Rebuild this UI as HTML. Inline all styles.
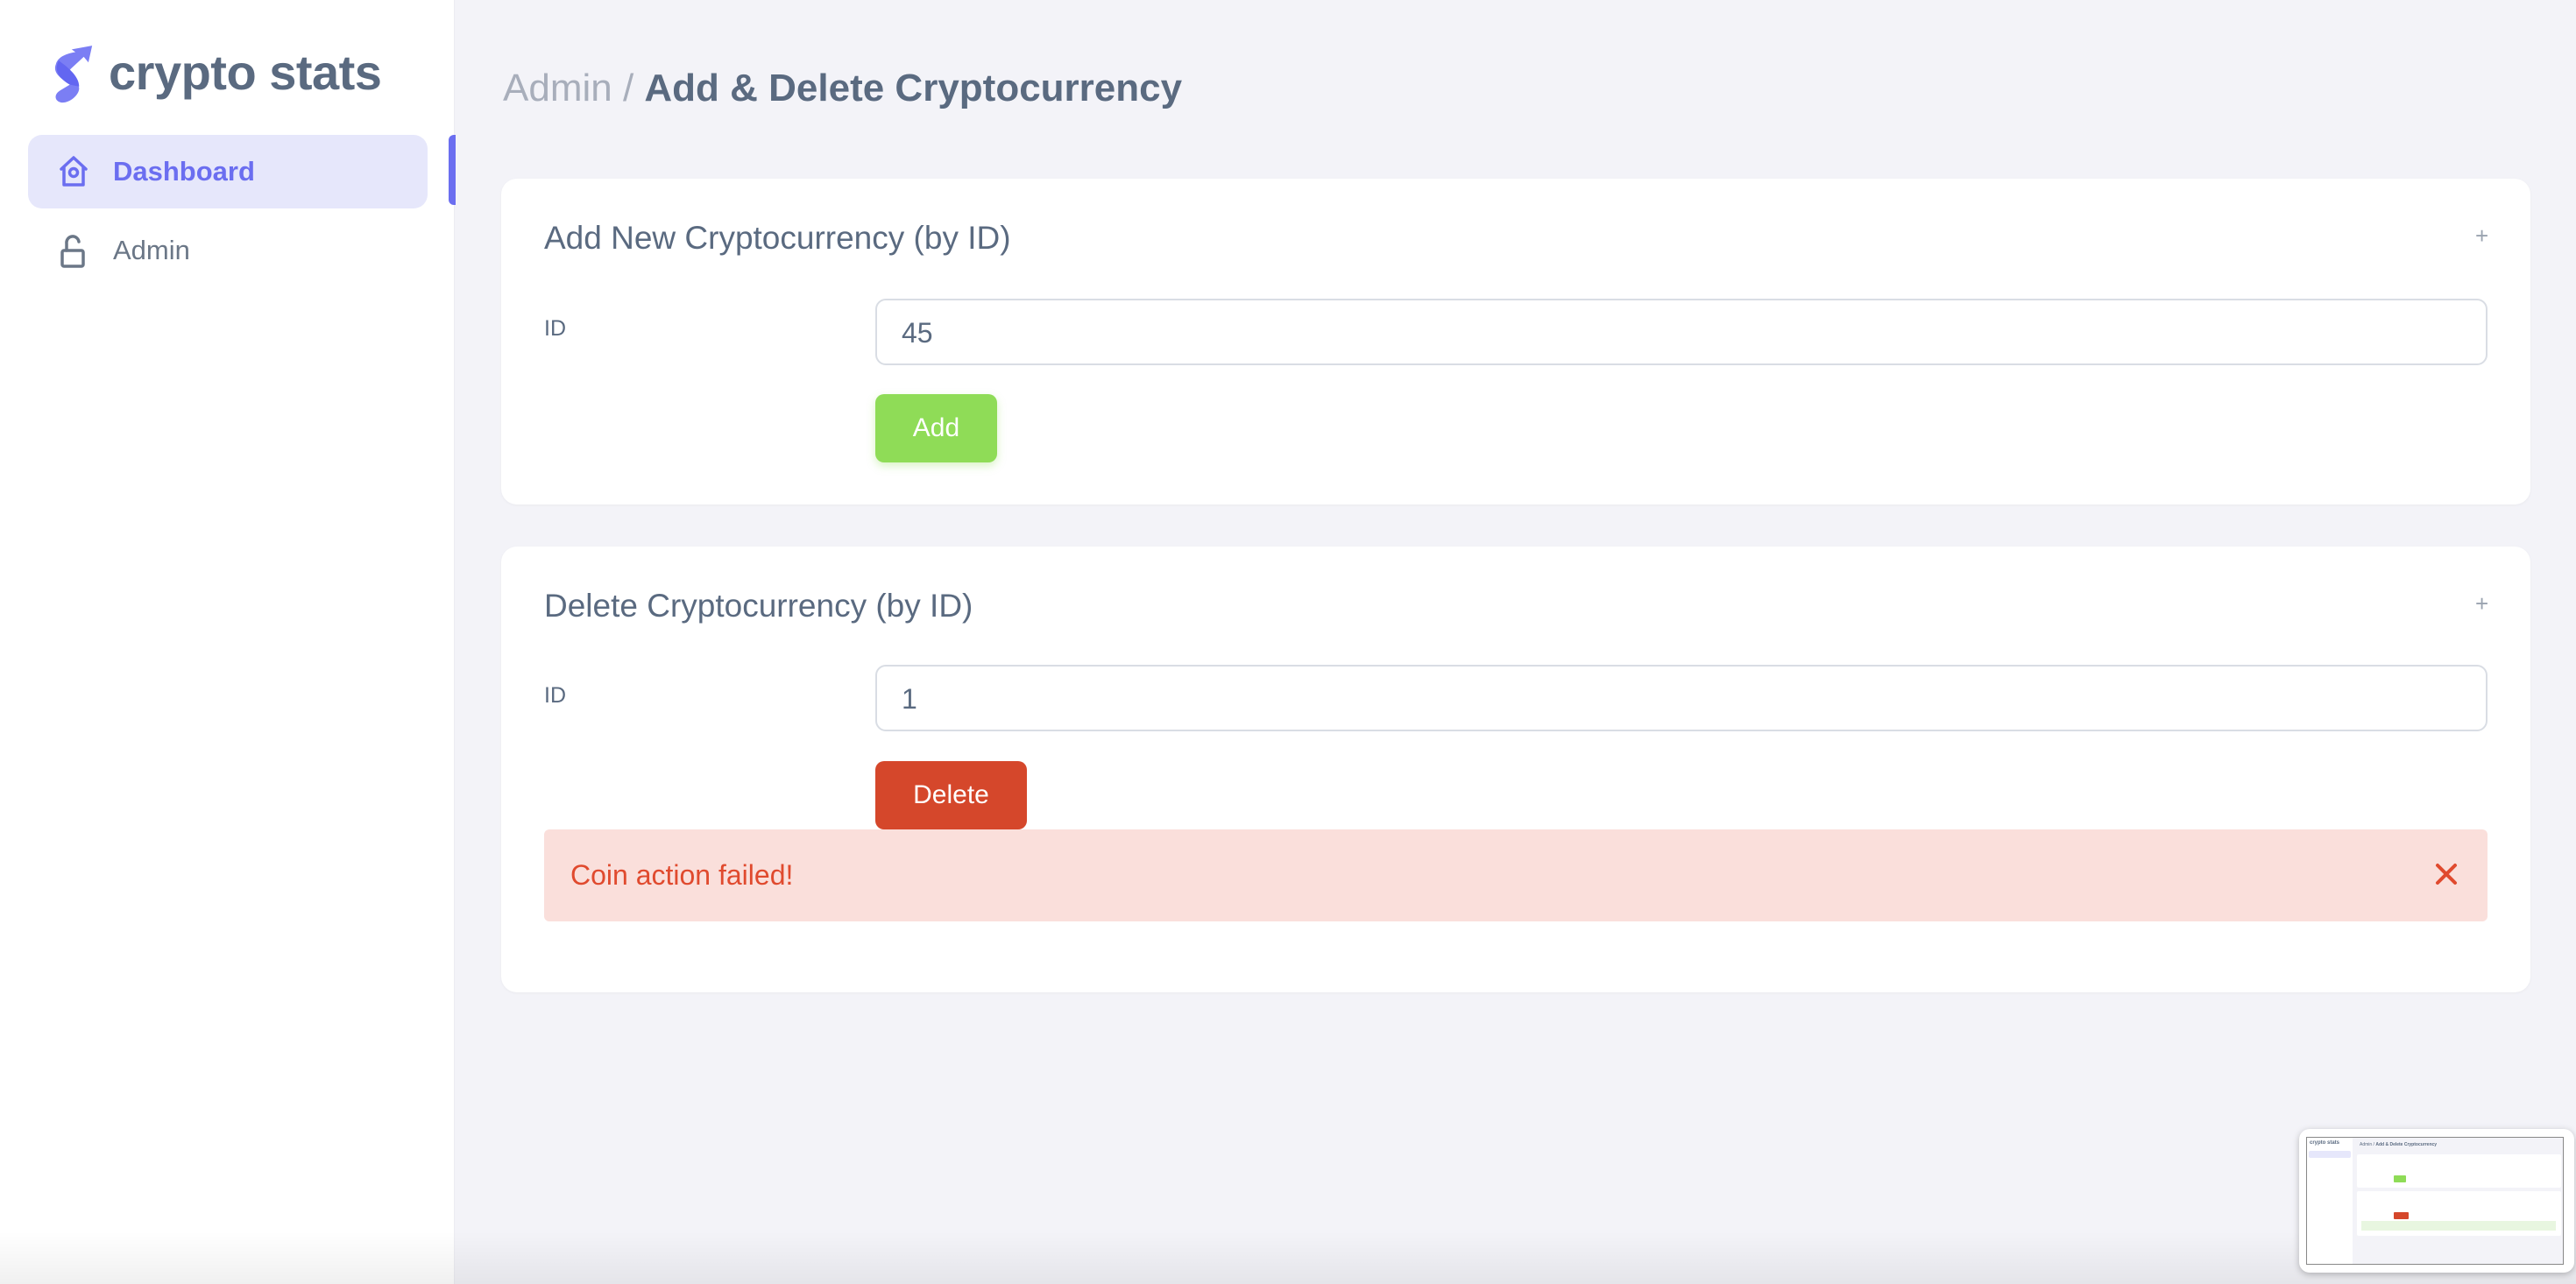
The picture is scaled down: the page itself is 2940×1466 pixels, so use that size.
<!DOCTYPE html>
<html><head><meta charset="utf-8"><style>
*{margin:0;padding:0;box-sizing:border-box}
body{width:2940px;height:1466px;overflow:hidden;background:#f3f3f8;font-family:"Liberation Sans",sans-serif;position:relative}
.sb{position:absolute;left:0;top:0;width:519px;height:1466px;background:#fff;border-right:1px solid #ececf2}
.abs{position:absolute}
.logo{left:124px;top:50px;font-size:56px;font-weight:700;color:#5a6a80;letter-spacing:-0.5px}
.nav1{left:32px;top:154px;width:456px;height:84px;background:#e6e7fb;border-radius:16px}
.nav1 span{position:absolute;left:97px;top:24px;font-size:31px;font-weight:700;color:#6b6ef0}
.bar{left:512px;top:154px;width:8px;height:80px;background:#6b6ef0;border-radius:6px 0 0 6px}
.adm{left:129px;top:268px;font-size:31px;color:#6b7787}
.bc{left:574px;top:76px;font-size:44px;color:#a8aebb}
.bc b{color:#5a6a80}
.card{position:absolute;left:572px;width:2316px;background:#fff;border-radius:18px;box-shadow:0 1px 3px rgba(0,0,0,.04)}
.ct{position:absolute;left:49px;font-size:37px;color:#5a6a80}
.plus{position:absolute;left:2253px;font-size:26px;color:#9aa3b0}
.lbl{position:absolute;left:49px;font-size:25px;color:#5a6a80}
.inp{position:absolute;left:427px;width:1840px;height:76px;border:2px solid #d9dde4;border-radius:12px;font-size:32px;color:#5a6a80;padding:19px 0 0 28px}
.btn{position:absolute;left:427px;height:78px;border-radius:10px;color:#fff;font-size:30px;text-align:center;line-height:78px}
.alert{position:absolute;left:49px;top:323px;width:2218px;height:105px;background:#fadfdb;border-radius:6px;color:#e04a2e;font-size:32px;line-height:105px;padding-left:30px}
.shade{position:absolute;left:0;bottom:0;width:2940px;height:60px;background:linear-gradient(rgba(0,0,0,0),rgba(0,0,0,.06))}
</style></head><body>
<div class="sb">
<svg class="abs" style="left:60px;top:50px" width="50" height="70" viewBox="0 0 46 66"><path d="M20 6 L42 2 L38 20 L33 14 L20 26 C12 32 28 40 28 48 C28 56 16 65 8 63 C1 61 1 54 8 50 L18 44 C10 38 -1 32 3 22 C5 15 12 11 24 9 Z" fill="#7b7ef4"/><path d="M6 18 C14 24 28 34 28 46 L18 44 C8 38 0 30 6 18Z" fill="#6366f1"/></svg>
<div class="abs logo">crypto stats</div>
<div class="abs nav1"><svg class="abs" style="left:34px;top:23px" width="36" height="38" viewBox="0 0 36 38"><path d="M4 16 L18 3 L32 16 M7 14 V34 H29 V14" fill="none" stroke="#6b6ef0" stroke-width="3.5" stroke-linejoin="round" stroke-linecap="round"/><circle cx="18" cy="20" r="4.5" fill="none" stroke="#6b6ef0" stroke-width="3.5"/></svg><span>Dashboard</span></div>
<div class="abs bar"></div>
<svg class="abs" style="left:68px;top:268px" width="32" height="40" viewBox="0 0 32 40"><path d="M8 18 V10 A7 7 0 0 1 22 8" fill="none" stroke="#6b7787" stroke-width="3.5" stroke-linecap="round"/><rect x="3" y="18" width="24" height="18" rx="2" fill="none" stroke="#6b7787" stroke-width="3.5"/></svg>
<div class="abs adm">Admin</div>
</div>
<div class="abs bc">Admin / <b>Add &amp; Delete Cryptocurrency</b></div>
<div class="card" style="top:204px;height:372px">
<div class="ct" style="top:47px">Add New Cryptocurrency (by ID)</div>
<div class="plus" style="top:50px">+</div>
<div class="lbl" style="top:157px">ID</div>
<div class="inp" style="top:137px">45</div>
<div class="btn" style="top:246px;width:139px;background:#8fdc57;box-shadow:0 4px 10px rgba(143,220,87,.35)">Add</div>
</div>
<div class="card" style="top:624px;height:509px">
<div class="ct" style="top:47px">Delete Cryptocurrency (by ID)</div>
<div class="plus" style="top:50px">+</div>
<div class="lbl" style="top:156px">ID</div>
<div class="inp" style="top:135px">1</div>
<div class="btn" style="top:245px;width:173px;background:#d5472b">Delete</div>
<div class="alert">Coin action failed!<svg class="abs" style="left:2158px;top:38px" width="26" height="26" viewBox="0 0 26 26"><path d="M3 3 L23 23 M23 3 L3 23" stroke="#e04a2e" stroke-width="4" stroke-linecap="round"/></svg></div>
</div>
<div class="shade"></div>
<div class="abs" style="left:2624px;top:1289px;width:314px;height:164px;background:#fff;border-radius:12px;box-shadow:0 2px 8px rgba(0,0,0,.25);padding:9px 8px">
<div style="position:relative;width:294px;height:146px;border:1px solid #888;background:#f3f3f8">
<div class="abs" style="left:0;top:0;width:52px;height:144px;background:#fff"></div>
<div class="abs" style="left:3px;top:3px;font-size:6px;color:#5a6a80;font-weight:700">crypto stats</div>
<div class="abs" style="left:2px;top:15px;width:48px;height:8px;background:#e6e7fb;border-radius:2px"></div>
<div class="abs" style="left:60px;top:5px;font-size:5px;color:#5a6a80">Admin / <b>Add &amp; Delete Cryptocurrency</b></div>
<div class="abs" style="left:57px;top:19px;width:233px;height:38px;background:#fff;border-radius:2px"></div>
<div class="abs" style="left:99px;top:43px;width:14px;height:8px;background:#8fdc57;border-radius:1px"></div>
<div class="abs" style="left:57px;top:61px;width:233px;height:51px;background:#fff;border-radius:2px"></div>
<div class="abs" style="left:99px;top:85px;width:17px;height:8px;background:#d5472b;border-radius:1px"></div>
<div class="abs" style="left:62px;top:95px;width:222px;height:11px;background:#e8f6e0"></div>
</div></div>
</body></html>
